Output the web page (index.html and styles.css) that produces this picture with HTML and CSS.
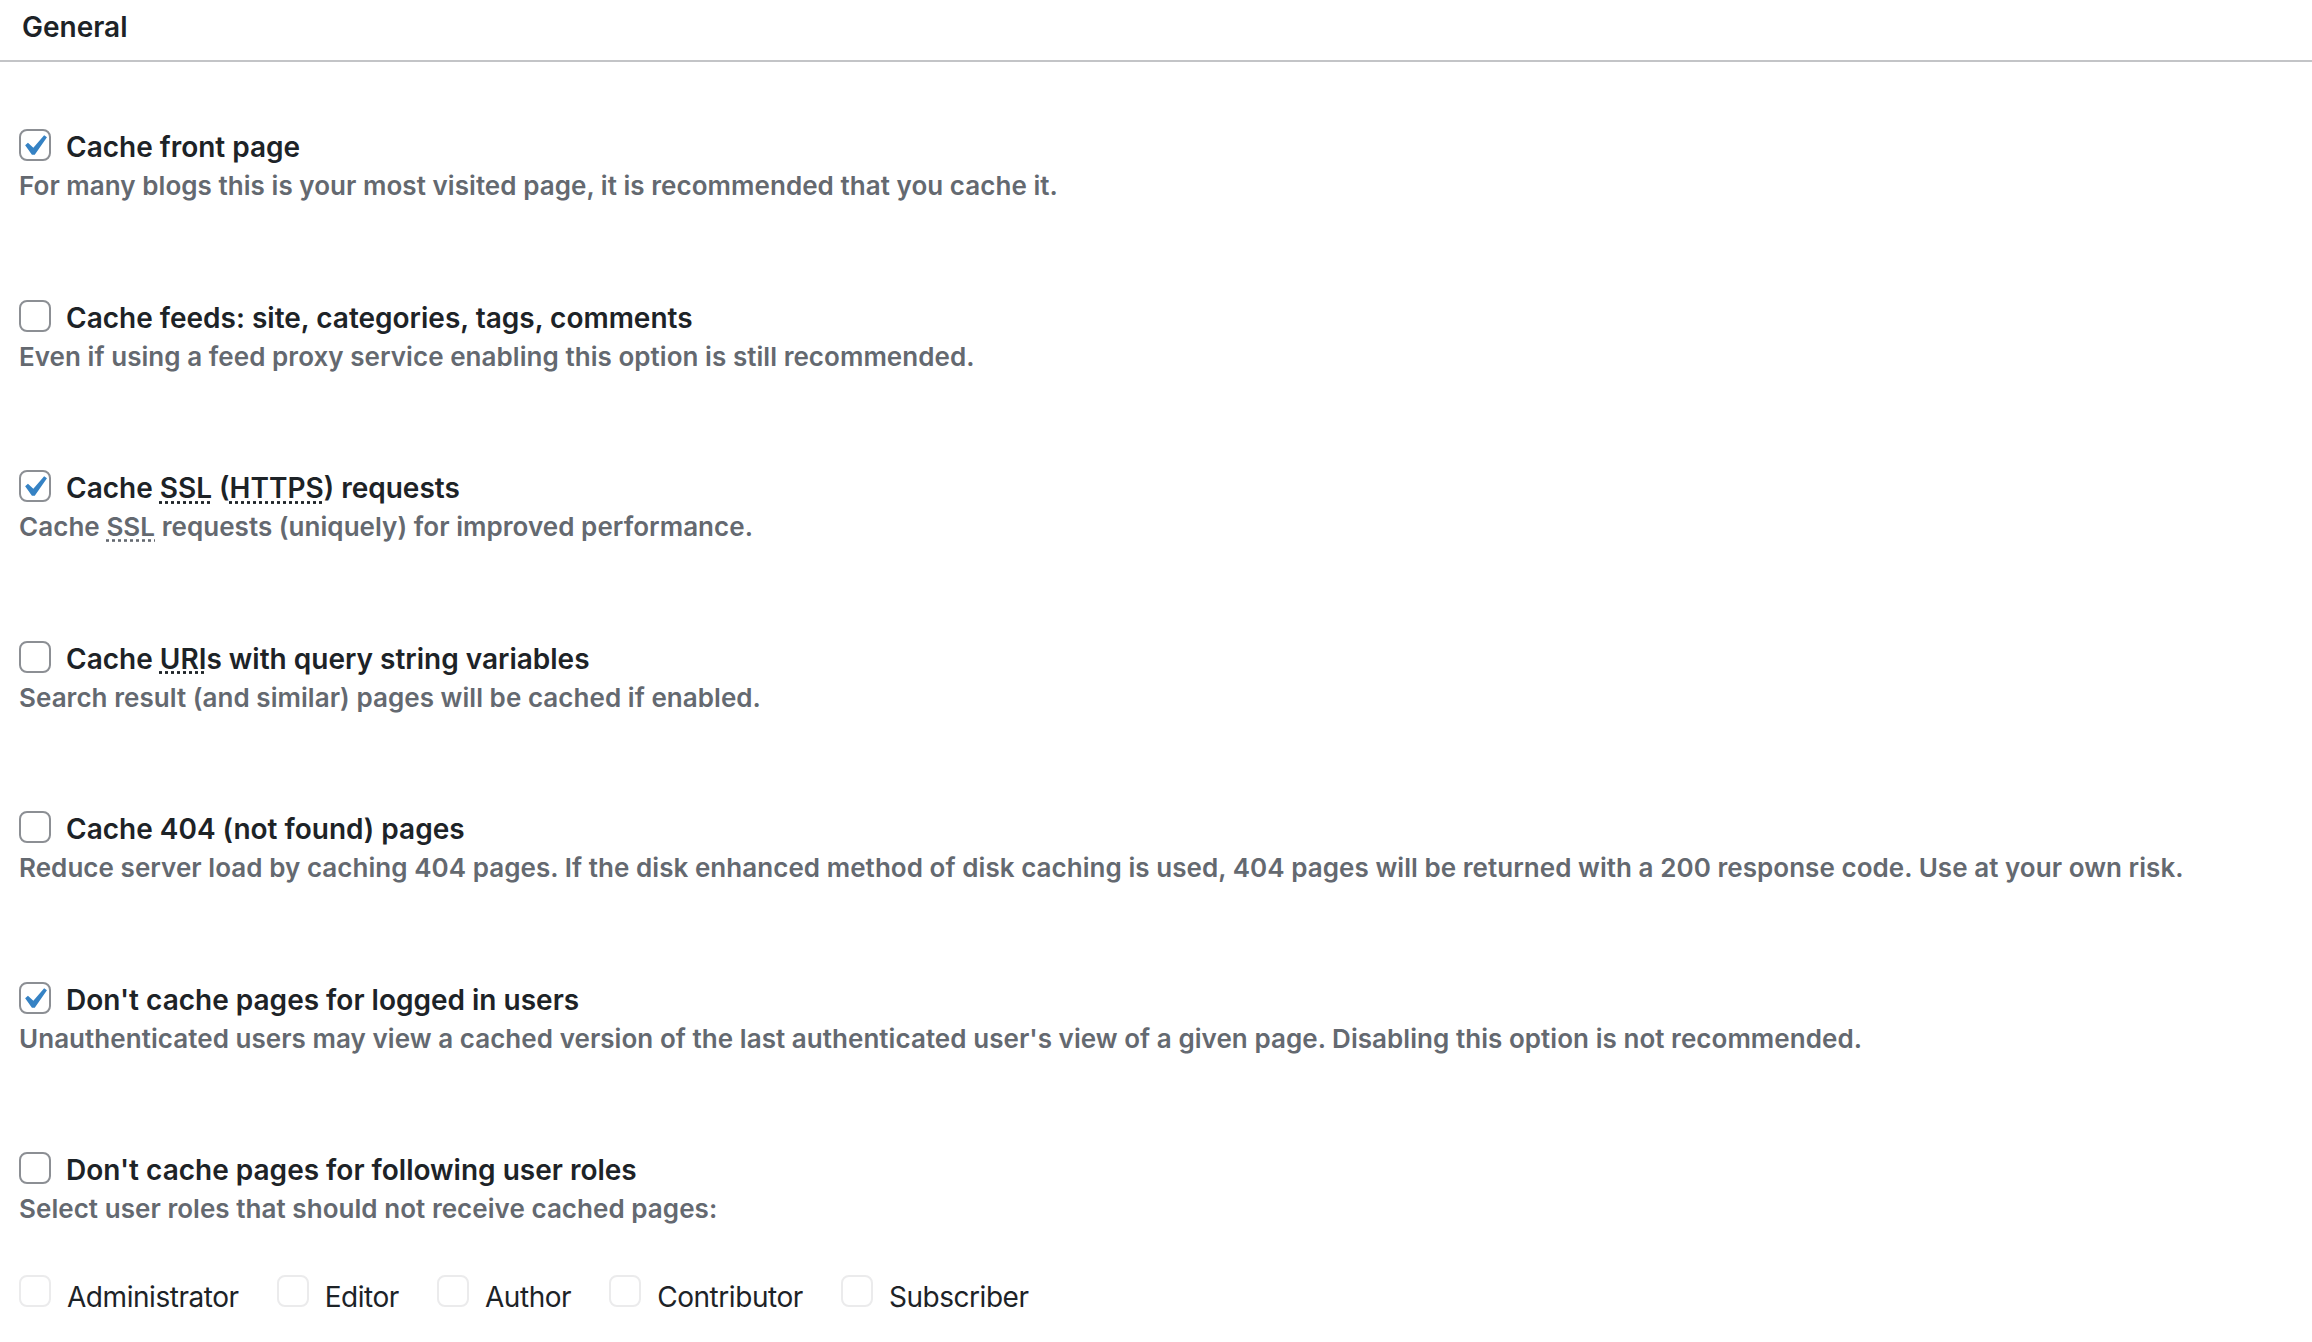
FILE: index.html
```html
<!DOCTYPE html>
<html lang="en">

<head>
    <meta charset="UTF-8">
    <meta name="viewport" content="width=device-width, initial-scale=1.0">
    <title>General</title>
    <link rel="stylesheet" href="styles.css">
</head>

<body>
    <div class="postbox">
        <h3 class="postbox_title">General</h3>
        <div class="options">
            <div class="option">
                <label class="option_label">
                    <span class="checkbox"><svg viewBox="0 0 20 20"><path d="M14.83 4.89l1.34.94-5.81 8.38H9.02L5.78 9.67l1.34-1.25 2.57 2.4z"/></svg></span>
                    Cache front page
                </label>
                <p class="description">For many blogs this is your most visited page, it is recommended that you cache it.</p>
            </div>
            <div class="option">
                <label class="option_label">
                    <span class="checkbox"></span>
                    Cache feeds: site, categories, tags, comments
                </label>
                <p class="description">Even if using a feed proxy service enabling this option is still recommended.</p>
            </div>
            <div class="option">
                <label class="option_label">
                    <span class="checkbox"><svg viewBox="0 0 20 20"><path d="M14.83 4.89l1.34.94-5.81 8.38H9.02L5.78 9.67l1.34-1.25 2.57 2.4z"/></svg></span>
                    <span>Cache <abbr title="Secure Sockets Layer">SSL</abbr> (<abbr title="HyperText Transfer Protocol over SSL">HTTPS</abbr>) requests</span>
                </label>
                <p class="description">Cache <abbr title="Secure Sockets Layer">SSL</abbr> requests (uniquely) for improved performance.</p>
            </div>
            <div class="option">
                <label class="option_label">
                    <span class="checkbox"></span>
                    <span>Cache <abbr title="Uniform Resource Indicator">URI</abbr>s with query string variables</span>
                </label>
                <p class="description">Search result (and similar) pages will be cached if enabled.</p>
            </div>
            <div class="option">
                <label class="option_label">
                    <span class="checkbox"></span>
                    Cache 404 (not found) pages
                </label>
                <p class="description">Reduce server load by caching 404 pages. If the disk enhanced method of disk caching is used, 404 pages will be returned with a 200 response code. Use at your own risk.</p>
            </div>
            <div class="option">
                <label class="option_label">
                    <span class="checkbox"><svg viewBox="0 0 20 20"><path d="M14.83 4.89l1.34.94-5.81 8.38H9.02L5.78 9.67l1.34-1.25 2.57 2.4z"/></svg></span>
                    Don't cache pages for logged in users
                </label>
                <p class="description">Unauthenticated users may view a cached version of the last authenticated user's view of a given page. Disabling this option is not recommended.</p>
            </div>
            <div class="option">
                <label class="option_label">
                    <span class="checkbox"></span>
                    Don't cache pages for following user roles
                </label>
                <p class="description">Select user roles that should not receive cached pages:</p>
                <div class="roles">
                    <label class="role"><span class="checkbox disabled"></span>Administrator</label>
                    <label class="role"><span class="checkbox disabled"></span>Editor</label>
                    <label class="role"><span class="checkbox disabled"></span>Author</label>
                    <label class="role"><span class="checkbox disabled"></span>Contributor</label>
                    <label class="role"><span class="checkbox disabled"></span>Subscriber</label>
                </div>
            </div>
        </div>
    </div>
</body>

</html>
```

FILE: styles.css
```css
* {
    margin: 0;
    padding: 0;
    box-sizing: border-box;
}

body {
    background: #fff;
    color: #1d2327;
    font-family: Inter, "Liberation Sans", sans-serif;
}

.postbox_title {
    height: 62px;
    padding: 0 22px 6px;
    border-bottom: 2px solid #c3c4c7;
    font-size: 28px;
    font-weight: 600;
    line-height: 54px;
}

.options {
    padding: 65px 19px 0;
}

.option {
    margin-bottom: 93.5px;
}

.option:last-child {
    margin-bottom: 0;
}

.option_label {
    display: flex;
    align-items: flex-start;
    gap: 15px;
    font-size: 28px;
    font-weight: 600;
    line-height: 40px;
}

/* checkbox 16px, drawn at 2x */
.checkbox {
    position: relative;
    flex: none;
    width: 32px;
    height: 32px;
    margin-top: 2px;
    border: 2px solid #8c8f94;
    border-radius: 8px;
    background: #fff;
}

.checkbox svg {
    position: absolute;
    top: -6px;
    left: -8px;
    width: 42px;
    height: 42px;
    fill: #3582c4;
}

.checkbox.disabled {
    margin-top: -2px;
    border-color: #ebebec;
}

.description {
    padding-top: 1px;
    font-size: 26px;
    font-weight: 600;
    line-height: 36px;
    letter-spacing: 0.05px;
    color: #646970;
}

abbr {
    text-decoration: underline dotted;
    text-underline-offset: 3px;
}

.roles {
    display: flex;
    gap: 38px;
    margin-top: 50px;
}

.role {
    display: flex;
    align-items: flex-start;
    gap: 16px;
    font-size: 28px;
    line-height: 40px;
    letter-spacing: -0.45px;
}
```
